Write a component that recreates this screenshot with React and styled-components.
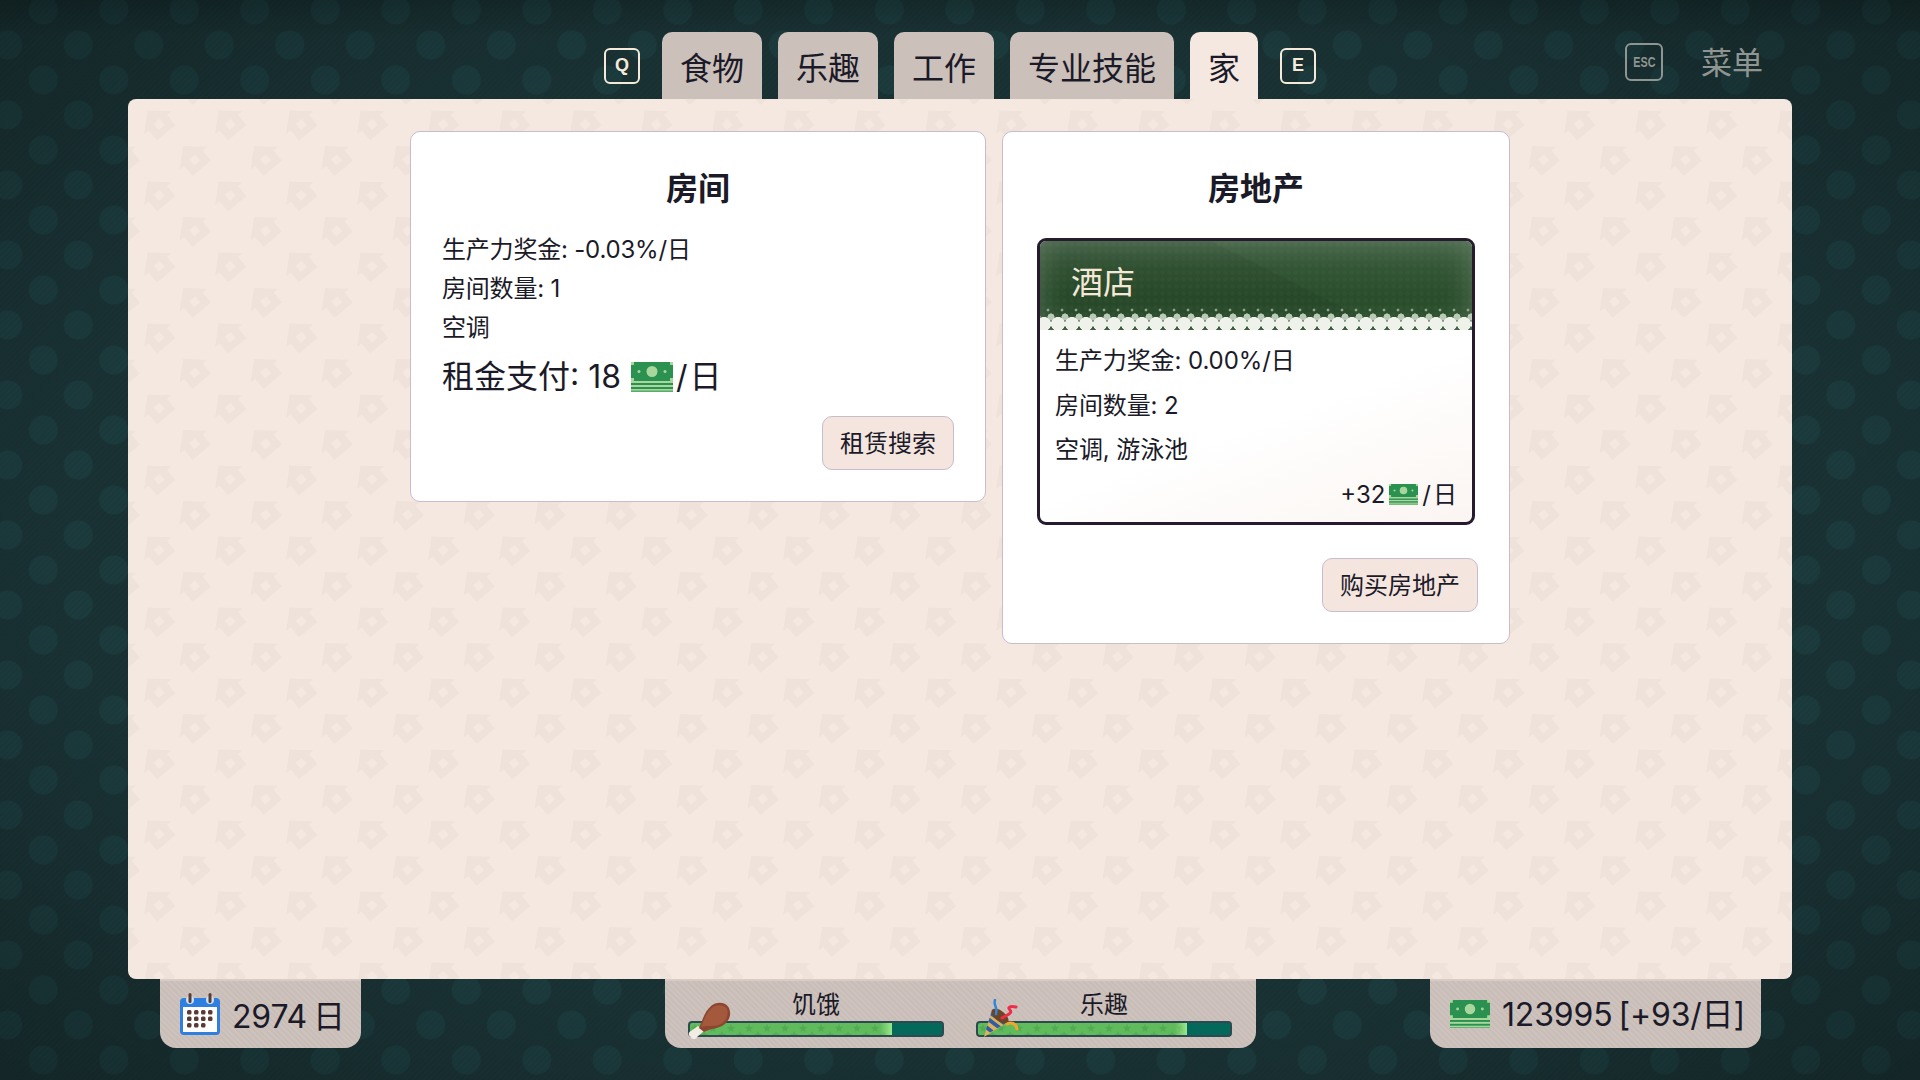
import styled, { createGlobalStyle } from "styled-components";

const svgUrl = (svg) => `url("data:image/svg+xml,${encodeURIComponent(svg)}")`;

const houseShape = `<path fill="#eee2da" d="M0-17L18-1H12V12H-12V-1H-18z"/><path fill="#f5e8e1" d="M-4-3H4V5H-4z"/>`;

const housePattern = svgUrl(`<svg xmlns="http://www.w3.org/2000/svg" width="71" height="71">
<g transform="translate(17.500 17.500) rotate(-40)">${houseShape}</g>
<g transform="translate(53 53) rotate(-40)">${houseShape}</g>
</svg>`);

const starPattern = svgUrl(`<svg xmlns="http://www.w3.org/2000/svg" width="18" height="16">
<path fill="#54ab54" d="M5 1l1.200 2.800 3 .2-2.300 2 .7 3L5 7.400 2.400 9l.7-3L.8 4l3-.2z"/>
<path fill="#54ab54" d="M14 8l1.200 2.800 3 .2-2.300 2 .7 3-2.600-1.600-2.600 1.600.7-3-2.300-2 3-.2z"/>
</svg>`);

const GlobalStyle = createGlobalStyle`
    html, body {
        margin: 0;
        padding: 0;
        background: #1a3234;
    }
    body {
        font-family: 'Inter', 'Noto Sans CJK SC', sans-serif;
        color: #1b1a28;
    }
`;

const Screen = styled.div`
    width: 1920px;
    height: 1080px;
    overflow: hidden;
    display: flex;
    flex-direction: column;
    background-color: #1a3234;
    background-image:
        radial-gradient(ellipse at center, rgba(0, 0, 0, 0) 65%, rgba(0, 0, 0, 0.24) 100%),
        linear-gradient(to bottom, rgba(0, 0, 0, 0.16), rgba(0, 0, 0, 0) 36px),
        repeating-linear-gradient(135deg, rgba(0, 0, 0, 0.035) 0 2px, rgba(0, 0, 0, 0) 2px 4px),
        radial-gradient(circle, #1c3b3d 14px, rgba(28, 59, 61, 0) 15px),
        radial-gradient(circle, #1c3b3d 14px, rgba(28, 59, 61, 0) 15px);
    background-size: 100% 100%, 100% 100%, auto, 70.5px 70px, 70.5px 70px;
    background-position: 0 0, 0 0, 0 0, 8px -25px, 43px 10px;
`;

const TopBar = styled.header`
    display: grid;
    grid-template-columns: 1fr auto 1fr;
    height: 99px;
    padding-top: 32px;
    box-sizing: border-box;
`;

const TabRow = styled.nav`
    grid-column: 2;
    display: flex;
    align-items: stretch;
    gap: 16px;
`;

const KeyHint = styled.div`
    align-self: center;
    display: flex;
    align-items: center;
    justify-content: center;
    width: 36px;
    height: 36px;
    box-sizing: border-box;
    border: 2.5px solid #f5ead9;
    border-radius: 6px;
    color: #f5ead9;
    font-family: 'Liberation Sans', sans-serif;
    font-size: 18px;
    font-weight: bold;
    margin: ${(p) => p.$side === "left" ? "0 6px 0 0" : "0 0 0 6px"};
`;

const Tab = styled.div`
    display: flex;
    align-items: center;
    padding: 0 18px;
    border-radius: 10px 10px 0 0;
    font-size: 32px;
    color: #1b1a28;
    background-color: ${(p) => p.$active ? "#f5e8e1" : "#cbc0ba"};
`;

const MenuArea = styled.div`
    grid-column: 3;
    justify-self: end;
    align-self: start;
    display: flex;
    align-items: center;
    gap: 38px;
    margin: 12px 157px 0 0;
    color: #8f9591;
    font-size: 31px;
    line-height: 38px;
`;

const EscHint = styled.div`
    display: flex;
    align-items: center;
    justify-content: center;
    width: 38px;
    height: 38px;
    box-sizing: border-box;
    margin-top: -2px;
    border: 2.5px solid #8f9591;
    border-radius: 6px;
    font-family: 'Liberation Sans', sans-serif;
    font-size: 15px;
    font-weight: bold;
    color: #8f9591;
`;

const EscText = styled.span`
    transform: scaleX(0.72);
`;

const Panel = styled.main`
    width: 1664px;
    height: 880px;
    margin: 0 auto;
    padding-top: 32px;
    box-sizing: border-box;
    display: flex;
    justify-content: center;
    align-items: flex-start;
    gap: 16px;
    border-radius: 8px;
    background-color: #f5e8e1;
    background-image: ${housePattern};
    background-position: 12.500px 6.500px;
`;

const Card = styled.section`
    width: ${(p) => p.$width}px;
    box-sizing: border-box;
    padding: 32px 31px 31px;
    display: flex;
    flex-direction: column;
    background: #ffffff;
    border: 1px solid #c9bccb;
    border-radius: 10px;
`;

const CardTitle = styled.h2`
    margin: 0;
    font-size: 32px;
    font-weight: bold;
    line-height: 50px;
    text-align: center;
`;

const InfoList = styled.div`
    margin-top: 16px;
`;

const InfoLine = styled.div`
    font-size: 24px;
    line-height: 39px;
    letter-spacing: -0.2px;
`;

const RentLine = styled.div`
    display: flex;
    align-items: center;
    margin-top: 6px;
    font-size: 32px;
    line-height: 48px;
    white-space: pre;
`;

const RentIcon = styled.span`
    margin: 0 3px 0 1px;
`;

const PerDay = styled.span`
    letter-spacing: 2px;
    margin-right: -2px;
`;

const ActionButton = styled.button`
    align-self: flex-end;
    height: 54px;
    margin-top: ${(p) => p.$top}px;
    padding: 0 17px 3px;
    font-family: inherit;
    font-size: 24px;
    color: #1b1a28;
    background: #f4e5df;
    border: 1px solid #c9bccb;
    border-radius: 10px;
`;

const HotelCard = styled.article`
    margin: 24px 3px 0 3px;
    border: 3px solid #261b2e;
    border-radius: 9px;
    overflow: hidden;
    background: linear-gradient(160deg, #ffffff 60%, #fbf5f2 100%);
`;

const HotelHeader = styled.div`
    position: relative;
    height: 90px;
    box-sizing: border-box;
    padding: 10px 0 0 31px;
    font-size: 32px;
    line-height: 64px;
    color: #f5e8d8;
    background-color: #2a4e2c;
    background-image:
        radial-gradient(circle, rgba(255, 255, 255, 0.02) 2px, rgba(255, 255, 255, 0) 2.500px),
        linear-gradient(26.600deg, rgba(0, 0, 0, 0.07) 57%, rgba(0, 0, 0, 0) 57.500%),
        linear-gradient(to bottom, rgba(255, 255, 255, 0.09), rgba(255, 255, 255, 0) 60%);
    background-size: 7px 7px, 100% 100%, 100% 100%;
    box-shadow: inset 0 0 30px rgba(255, 255, 255, 0.2);
`;

const HeaderEdge = styled.div`
    position: absolute;
    left: 0;
    right: 0;
    bottom: 0;
    height: 24px;
    background-image:
        linear-gradient(#ffffff, #ffffff),
        radial-gradient(circle, #eef2ea 6.800px, rgba(238, 242, 234, 0) 7.200px),
        radial-gradient(circle, #b9cbb6 3.300px, rgba(185, 203, 182, 0) 3.800px),
        radial-gradient(circle, #8fa68d 1.200px, rgba(143, 166, 141, 0) 1.700px);
    background-repeat: no-repeat, repeat-x, repeat-x, repeat-x;
    background-size: 100% 1px, 14px 14px, 14px 8px, 14px 6px;
    background-position: 0 bottom, -3px 10px, 4px 6px, 1px 0;
`;

const HotelBody = styled.div`
    padding: 8px 15px 5px;
`;

const HotelLine = styled.div`
    font-size: 24px;
    line-height: 44.500px;
    letter-spacing: -0.1px;
`;

const HotelIncome = styled.div`
    display: flex;
    align-items: center;
    justify-content: flex-end;
    gap: 4px;
    font-size: 24px;
    line-height: 44px;
`;

const BottomBar = styled.footer`
    display: grid;
    grid-template-columns: 1fr auto 1fr;
    padding: 0 159px 0 160px;
`;

const Tray = styled.div`
    justify-self: ${(p) => p.$align};
    display: flex;
    height: 69px;
    box-sizing: border-box;
    border-radius: 0 0 16px 16px;
    background-color: #cbc0ba;
    background-image: repeating-linear-gradient(45deg, rgba(255, 255, 255, 0.04) 0 2px, rgba(0, 0, 0, 0.015) 2px 4px);
    box-shadow: inset 0 2px 0 #d9ccc4;
`;

const InfoTray = styled(Tray)`
    align-items: center;
    gap: 12px;
    padding: 0 16px ${(p) => p.$lift}px 20px;
    font-size: 32px;
    white-space: pre;
    word-spacing: -3px;
    letter-spacing: -0.15px;
`;

const MoneySlot = styled.div`
    margin-top: 5px;
`;

const StatsTray = styled(Tray)`
    gap: 32px;
    padding: 13px 24px 0 23px;
`;

const Stat = styled.div`
    position: relative;
    width: 256px;
`;

const StatLabel = styled.div`
    font-size: 24px;
    line-height: 26px;
    text-align: center;
`;

const StatIcon = styled.div`
    position: absolute;
    left: ${(p) => p.$left}px;
    bottom: ${(p) => p.$bottom}px;
    display: flex;
`;

const Meter = styled.div`
    height: 16px;
    margin-top: 3px;
    box-sizing: border-box;
    border: 2px solid #2c4a50;
    border-radius: 4px;
    overflow: hidden;
    background: #04685a;
`;

const MeterFill = styled.div`
    height: 100%;
    background-color: #5fbb5c;
    background-image: linear-gradient(to right, rgba(150, 230, 140, 0) calc(100% - 12px), #9be68c 100%), ${starPattern};
`;

function MoneyIcon ({ width }) {
    return (
        <svg width={width} viewBox="0 0 42 30" style={{ display: "block", flexShrink: 0 }}>
            <rect y="0" width="42" height="30" fill="#a9d69c" />
            <path fill="#2a9150" d="M3 0h36v3h3v13h-3v3H3v-3H0V3h3z" />
            <circle cx="21" cy="9.500" r="5.500" fill="#a9d69c" />
            <circle cx="8" cy="9.500" r="1.500" fill="#a9d69c" />
            <circle cx="34" cy="9.500" r="1.500" fill="#a9d69c" />
            <rect y="21" width="42" height="2" fill="#2a9150" />
            <rect y="25" width="42" height="2" fill="#2a9150" />
            <rect y="28.500" width="42" height="1.500" fill="#5cab6e" />
        </svg>
    );
}

function CalendarIcon () {
    return (
        <svg width="40" height="42" viewBox="0 0 40 42" style={{ display: "block" }}>
            <rect x="0" y="5" width="40" height="37" rx="4" fill="#2f7fe0" />
            <rect x="3" y="14" width="34" height="25" fill="#ffffff" />
            <circle cx="10" cy="7" r="4" fill="#cfe2f8" />
            <circle cx="30" cy="7" r="4" fill="#cfe2f8" />
            <rect x="8.500" y="0" width="3" height="10" rx="1.500" fill="#5b3a32" />
            <rect x="28.500" y="0" width="3" height="10" rx="1.500" fill="#5b3a32" />
            <g fill="#5b3a32">
                {[7, 14, 21, 28].map((x) => <rect key={x} x={x} y="17" width="4.500" height="4.500" rx="1.500" />)}
                {[7, 14, 21, 28].map((x) => <rect key={x} x={x} y="23.500" width="4.500" height="4.500" rx="1.500" />)}
                {[7, 14, 21].map((x) => <rect key={x} x={x} y="30" width="4.500" height="4.500" rx="1.500" />)}
            </g>
        </svg>
    );
}

function DrumstickIcon () {
    return (
        <svg width="44" height="40" viewBox="0 0 44 40" style={{ display: "block" }}>
            <path fill="#f1ece4" d="M10 24l6 5-7 6c-1 3-5 3-6 0-3-1-3-5 0-6z" />
            <path fill="#8e4630" d="M11 26C14 20 16 10 23 4c6-5 15-4 18 2 3 7 0 14-7 18-6 3-13 3-18 6z" />
            <path fill="#a4583c" d="M13 25c3-6 5-15 12-20 5-3 12-2 14 2 2 6-1 12-6 15-6 3-14 1-20 3z" />
        </svg>
    );
}

function PopperIcon () {
    return (
        <svg width="44" height="44" viewBox="0 0 44 44" style={{ display: "block" }}>
            <path fill="#e2b25a" d="M5 38L13 11L29 23z" />
            <path fill="#2f5ea8" d="M7 30.500L11 33.500 14.600 31.400 8.200 26.600zM9.400 22.700L18.200 29.300 21.800 27.200 10.600 18.800zM11.400 16.200L24.200 25.800 27.100 24.100 12.400 13.100z" />
            <ellipse cx="21" cy="17" rx="10" ry="5" transform="rotate(38 21 17)" fill="#6b4524" />
            <path fill="none" stroke="#2f86dc" strokeWidth="2.500" strokeLinecap="round" d="M17 15C19 8 14 6 16 1" />
            <path fill="none" stroke="#ee2d4a" strokeWidth="3" strokeLinecap="round" d="M23 19C28 16 34 14 31 11C28 8 31 7 37 8" />
            <path fill="none" stroke="#f2a52c" strokeWidth="3" strokeLinecap="round" d="M28 25C32 23 37 24 38 30" />
        </svg>
    );
}

export default function App () {
    return (
        <Screen>
            <GlobalStyle />
            <TopBar>
                <TabRow>
                    <KeyHint $side="left">Q</KeyHint>
                    <Tab>食物</Tab>
                    <Tab>乐趣</Tab>
                    <Tab>工作</Tab>
                    <Tab>专业技能</Tab>
                    <Tab $active>家</Tab>
                    <KeyHint $side="right">E</KeyHint>
                </TabRow>
                <MenuArea>
                    <EscHint><EscText>ESC</EscText></EscHint>
                    <span>菜单</span>
                </MenuArea>
            </TopBar>
            <Panel>
                <Card $width={576}>
                    <CardTitle>房间</CardTitle>
                    <InfoList>
                        <InfoLine>生产力奖金: -0.03%/日</InfoLine>
                        <InfoLine>房间数量: 1</InfoLine>
                        <InfoLine>空调</InfoLine>
                    </InfoList>
                    <RentLine>租金支付: 18 <RentIcon><MoneyIcon width={42} /></RentIcon><PerDay>/日</PerDay></RentLine>
                    <ActionButton $top={15}>租赁搜索</ActionButton>
                </Card>
                <Card $width={508}>
                    <CardTitle>房地产</CardTitle>
                    <HotelCard>
                        <HotelHeader>
                            酒店
                            <HeaderEdge />
                        </HotelHeader>
                        <HotelBody>
                            <HotelLine>生产力奖金: 0.00%/日</HotelLine>
                            <HotelLine>房间数量: 2</HotelLine>
                            <HotelLine>空调, 游泳池</HotelLine>
                            <HotelIncome>+32 <MoneyIcon width={29} /><PerDay>/日</PerDay></HotelIncome>
                        </HotelBody>
                    </HotelCard>
                    <ActionButton $top={33}>购买房地产</ActionButton>
                </Card>
            </Panel>
            <BottomBar>
                <InfoTray $align="start" $lift={0}>
                    <CalendarIcon />
                    <span>2974 日</span>
                </InfoTray>
                <StatsTray $align="center">
                    <Stat>
                        <StatLabel>饥饿</StatLabel>
                        <StatIcon $left={0} $bottom={6}><DrumstickIcon /></StatIcon>
                        <Meter><MeterFill style={{ width: "80%" }} /></Meter>
                    </Stat>
                    <Stat>
                        <StatLabel>乐趣</StatLabel>
                        <StatIcon $left={3} $bottom={5}><PopperIcon /></StatIcon>
                        <Meter><MeterFill style={{ width: "83%" }} /></Meter>
                    </Stat>
                </StatsTray>
                <InfoTray $align="end" $lift={4}>
                    <MoneySlot><MoneyIcon width={40} /></MoneySlot>
                    <span>123995 [+93/日]</span>
                </InfoTray>
            </BottomBar>
        </Screen>
    );
}
